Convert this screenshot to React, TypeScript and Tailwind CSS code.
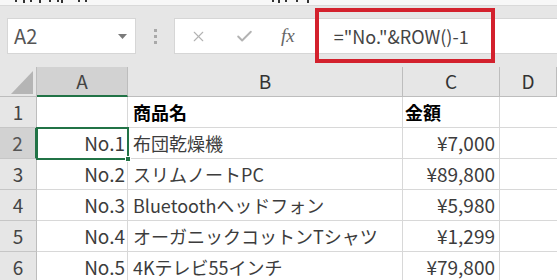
import React from "react";
import { X, Check } from "lucide-react";

const FONT = { fontFamily: '"Noto Sans CJK JP", "Noto Sans", sans-serif' };

const rows = [
  { no: "", name: "商品名", price: "金額", head: true },
  { no: "No.1", name: "布団乾燥機", price: "¥7,000" },
  { no: "No.2", name: "スリムノートPC", price: "¥89,800" },
  { no: "No.3", name: "Bluetoothヘッドフォン", price: "¥5,980" },
  { no: "No.4", name: "オーガニックコットンTシャツ", price: "¥1,299" },
  { no: "No.5", name: "4Kテレビ55インチ", price: "¥79,800" },
];

function FormulaBar() {
  return (
    <div className="relative h-[61px] bg-[#e6e6e6] flex items-start pt-[12px]">
      {/* 名前ボックス */}
      <div className="ml-[7px] w-[129px] h-[36px] bg-white border border-[#d6d6d6] flex items-center justify-between pl-[6px] pr-[8px]">
        <span className="text-[20px] text-[#555]" style={FONT}>A2</span>
        <svg width="9" height="5" viewBox="0 0 9 5"><path d="M0 0h9L4.5 5z" fill="#7a7a7a" /></svg>
      </div>
      <div className="w-[38px] h-[36px] flex flex-col items-center justify-center gap-[3px]">
        <span className="w-[3px] h-[3px] bg-[#a9a9a9]" />
        <span className="w-[3px] h-[3px] bg-[#a9a9a9]" />
        <span className="w-[3px] h-[3px] bg-[#a9a9a9]" />
      </div>
      {/* 数式バー */}
      <div className="flex-1 h-[36px] bg-white border border-[#d6d6d6] border-r-0 flex items-center">
        <X size={17} strokeWidth={1.6} className="ml-[15px] text-[#b3b3b3]" />
        <Check size={19} strokeWidth={2.4} className="ml-[28px] text-[#b3b3b3]" />
        <span className="ml-[27px] text-[19px] italic text-[#666]" style={{ fontFamily: '"Liberation Serif", serif' }}>fx</span>
        <span className="ml-[39px] text-[18px] text-[#444]" style={FONT}>="No."&amp;ROW()-1</span>
      </div>
      {/* 赤枠 */}
      <div className="absolute left-[315px] top-[2px] w-[180px] h-[55px] border-[4px] border-[#d3212d]" />
    </div>
  );
}

function Sheet() {
  const cols = ["A", "B", "C", "D"];
  return (
    <div className="grid grid-cols-[37px_91px_275px_97px_1fr] grid-rows-[30px_repeat(6,31px)] bg-white text-[19px] text-[#3c3c3c]" style={FONT}>
      <div className="bg-[#e6e6e6] border-r border-b border-[#bdbdbd] flex items-end justify-end pr-[3px] pb-[2px]">
        <svg width="22" height="23" viewBox="0 0 22 23"><path d="M22 0V23H0z" fill="#b5b5b5" /></svg>
      </div>
      {cols.map((c) => (
        <div
          key={c}
          className={`flex items-center justify-center border-r border-[#bdbdbd] text-[19px] ${
            c === "A" ? "bg-[#d2d2d2] border-b-2 border-b-[#217346] text-[#444]" : "bg-[#e6e6e6] border-b border-b-[#bdbdbd] text-[#333]"
          }`}
        >
          {c}
        </div>
      ))}
      {rows.map((r, i) => (
        <React.Fragment key={i}>
          <div
            className={`flex items-center justify-center border-b border-[#c6c6c6] ${
              i === 1 ? "bg-[#d2d2d2] border-r-2 border-r-[#217346] text-[#555]" : "bg-[#e6e6e6] border-r border-r-[#bdbdbd] text-[#444]"
            }`}
          >
            {i + 1}
          </div>
          <div className={`relative flex items-center justify-end pr-[2px] border-r border-b border-[#d8d8d8] ${i === 1 ? "outline-2 outline-[#217346] -outline-offset-1 z-10" : ""}`}>
            {r.no}
            {i === 1 && <span className="absolute -right-[4px] -bottom-[4px] w-[6px] h-[6px] bg-[#217346] border border-white" />}
          </div>
          <div className={`flex items-center pl-[5px] border-r border-b border-[#d8d8d8] whitespace-nowrap text-[18px] ${r.head ? "font-bold text-black" : ""}`}>
            {r.name}
          </div>
          <div className={`flex items-center pr-[4px] border-r border-b border-[#d8d8d8] ${r.head ? "justify-start pl-[2px] font-bold text-black text-[18px]" : "justify-end"}`}>
            {r.price}
          </div>
          <div className="border-b border-[#d8d8d8]" />
        </React.Fragment>
      ))}
    </div>
  );
}

export default function App() {
  return (
    <div className="w-[557px] h-[280px] overflow-hidden bg-[#e6e6e6]">
      {/* 上の行の文字の下端だけが見えている */}
      <div className="h-[6px] bg-[#f7f7f7] border-b border-[#d9d9d9]">
        <svg width="557" height="5" viewBox="0 0 557 5">
          <g stroke="#333" strokeWidth="2">
            <path d="M16 0v2M24 0v3M31 0v2M40 0v3M50 0v2M58 0v2M62 0v3M79 0v2M86 0v2" />
            <path d="M273 0v2M279 0v3M286 0v2M297 0v2M308 0v3" />
          </g>
        </svg>
      </div>
      <FormulaBar />
      <Sheet />
    </div>
  );
}
